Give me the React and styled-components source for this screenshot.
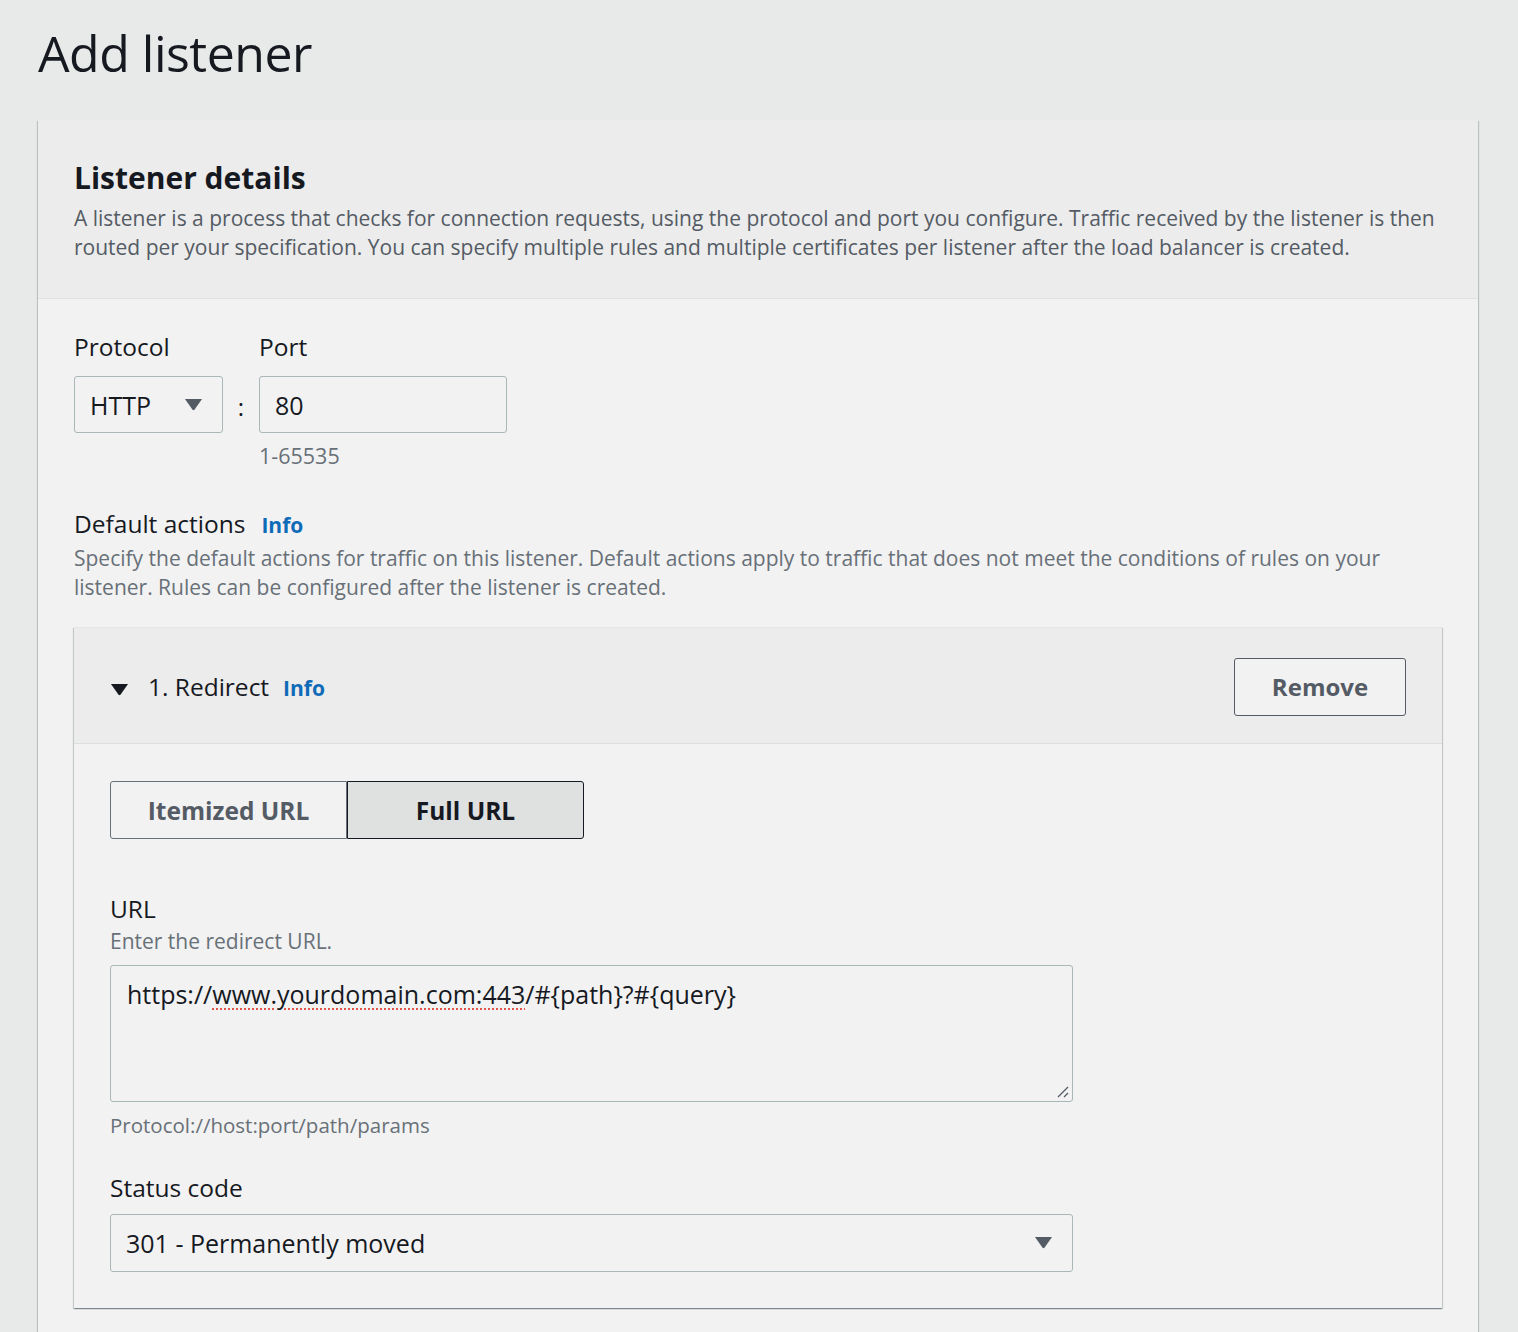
import React from "react";
import styled, { createGlobalStyle } from "styled-components";

const GlobalStyle = createGlobalStyle`
  html, body {
    margin: 0;
    background: #e8eaea;
    font-family: "Open Sans", "Noto Sans", sans-serif;
    color: #16191f;
  }
`;

const Page = styled.div`
  padding: 20px 40px 0 38px;
  height: 1332px;
  box-sizing: border-box;
  overflow: hidden;
`;

const Title = styled.h1`
  margin: 0;
  height: 100px;
  font-size: 50px;
  font-weight: 400;
  line-height: 66px;
  letter-spacing: -0.5px;
`;

const Panel = styled.section`
  background: #f2f2f2;
  box-shadow: 0 1px 1px 0 rgba(0, 28, 36, 0.3), 1px 1px 1px 0 rgba(0, 28, 36, 0.15),
    -1px 1px 1px 0 rgba(0, 28, 36, 0.15);
  min-height: 1300px;
`;

const PanelHeader = styled.header`
  background: #ececec;
  border-bottom: 1px solid #e0e1e1;
  padding: 38px 36px 36px;
`;

const Heading = styled.h2`
  margin: 0 0 6px;
  font-size: 30px;
  font-weight: 700;
  line-height: 40px;
`;

const Desc = styled.p`
  margin: ${(p) => p.$mt || 0}px 0 0;
  font-size: 21px;
  line-height: 29px;
  color: ${(p) => p.$color || "#545b64"};
`;

const PanelBody = styled.div`
  padding: 32px 36px 0;
`;

const FieldRow = styled.div`
  display: flex;
  align-items: flex-start;
`;

const Field = styled.div`
  display: flex;
  flex-direction: column;
`;

const Label = styled.label`
  font-size: 24.5px;
  line-height: 32px;
  margin-bottom: ${(p) => (p.$mb === undefined ? 13 : p.$mb)}px;
  display: flex;
  align-items: baseline;
  gap: 16px;
`;

const InfoLink = styled.a`
  color: #0f6bb8;
  font-weight: 700;
  font-size: 21px;
  text-decoration: none;
`;

const Box = styled.div`
  box-sizing: border-box;
  width: ${(p) => p.$w}px;
  height: ${(p) => p.$h || 57}px;
  border: 1px solid #aab7b8;
  border-radius: 3px;
  display: flex;
  align-items: ${(p) => (p.$top ? "flex-start" : "center")};
  justify-content: space-between;
  padding: ${(p) => (p.$top ? "11px 16px" : "0 19px 0 15px")};
  font-size: 25px;
  background: #f2f2f2;
  position: relative;
`;

const Colon = styled.span`
  font-size: 24px;
  width: 36px;
  text-align: center;
  margin-top: 59px;
`;

const Hint = styled.div`
  color: #687078;
  font-size: ${(p) => p.$fs || 21.5}px;
  line-height: 28px;
  margin-top: 9px;
`;

const Caret = styled.svg`
  width: ${(p) => p.$s || 19}px;
  height: ${(p) => (p.$s || 19) * 0.7}px;
  fill: ${(p) => p.$c || "#545b64"};
  flex-shrink: 0;
`;

const Section = styled.div`
  margin-top: ${(p) => p.$mt || 0}px;
`;

const Card = styled.div`
  margin-top: 25px;
  background: #f2f2f2;
  box-shadow: 0 1px 1px 0 rgba(0, 28, 36, 0.3), 1px 1px 1px 0 rgba(0, 28, 36, 0.15),
    -1px 1px 1px 0 rgba(0, 28, 36, 0.15);
  border-top: 1px solid #e4e5e5;
`;

const CardHeader = styled.div`
  background: #ececec;
  border-bottom: 1px solid #dcdddd;
  height: 116px;
  box-sizing: border-box;
  display: flex;
  align-items: center;
  padding: 2px 36px 0 36px;
`;

const CardTitle = styled.div`
  display: flex;
  align-items: baseline;
  gap: 14px;
  font-size: 24.5px;
  flex: 1;
  span.caret {
    margin-right: 5px;
  }
`;

const Button = styled.button`
  box-sizing: border-box;
  width: 172px;
  height: 58px;
  border: 1px solid #545b64;
  border-radius: 3px;
  background: #f2f2f2;
  color: #545b64;
  font-family: inherit;
  font-weight: 700;
  font-size: 24px;
`;

const CardBody = styled.div`
  padding: 37px 36px 36px;
`;

const Segmented = styled.div`
  display: flex;
  width: 474px;
  height: 58px;
`;

const Segment = styled.button`
  flex: 1;
  box-sizing: border-box;
  font-family: inherit;
  font-weight: 700;
  font-size: 24.5px;
  border: 1px solid ${(p) => (p.$active ? "#16191f" : "#687078")};
  border-radius: ${(p) => (p.$active ? "0 3px 3px 0" : "3px 0 0 3px")};
  background: ${(p) => (p.$active ? "#dfe0e0" : "#f2f2f2")};
  color: ${(p) => (p.$active ? "#16191f" : "#545b64")};
`;

const FieldLabel = styled.div`
  font-size: 24.5px;
  line-height: 34px;
  margin-bottom: ${(p) => p.$mb || 0}px;
`;

const Sub = styled.div`
  color: #687078;
  font-size: 21px;
  line-height: 30px;
  margin-bottom: 9px;
`;

const Misspelled = styled.span`
  text-decoration: underline dotted #e0564a;
  text-decoration-thickness: 2px;
  text-underline-offset: 4px;
`;

const Grip = styled.svg`
  position: absolute;
  right: 2px;
  bottom: 2px;
  width: 16px;
  height: 16px;
  stroke: #545b64;
  stroke-width: 1.3;
`;

function DownCaret({ s, c }) {
  return (
    <Caret $s={s} $c={c} viewBox="0 0 20 14">
      <path d="M1 1 H19 L11 12.5 Q10 13.5 9 12.5 Z" />
    </Caret>
  );
}

export default function App() {
  return (
    <>
      <GlobalStyle />
      <Page>
        <Title>Add listener</Title>
        <Panel>
          <PanelHeader>
            <Heading>Listener details</Heading>
            <Desc>
              A listener is a process that checks for connection requests, using the protocol and
              port you configure. Traffic received by the listener is then routed per your
              specification. You can specify multiple rules and multiple certificates per listener
              after the load balancer is created.
            </Desc>
          </PanelHeader>
          <PanelBody>
            <FieldRow>
              <Field>
                <Label>Protocol</Label>
                <Box $w={149}>
                  HTTP
                  <DownCaret />
                </Box>
              </Field>
              <Colon>:</Colon>
              <Field>
                <Label>Port</Label>
                <Box $w={248}>80</Box>
                <Hint>1-65535</Hint>
              </Field>
            </FieldRow>

            <Section $mt={38}>
              <Label as="div" $mb={0}>
                Default actions <InfoLink href="#">Info</InfoLink>
              </Label>
              <Desc $color="#687078" $mt={3}>
                Specify the default actions for traffic on this listener. Default actions apply to
                traffic that does not meet the conditions of rules on your listener. Rules can be
                configured after the listener is created.
              </Desc>
            </Section>

            <Card>
              <CardHeader>
                <CardTitle>
                  <span className="caret">
                    <DownCaret s={19} c="#16191f" />
                  </span>
                  1. Redirect <InfoLink href="#">Info</InfoLink>
                </CardTitle>
                <Button>Remove</Button>
              </CardHeader>
              <CardBody>
                <Segmented>
                  <Segment>Itemized URL</Segment>
                  <Segment $active>Full URL</Segment>
                </Segmented>

                <Section $mt={53}>
                  <FieldLabel>URL</FieldLabel>
                  <Sub>Enter the redirect URL.</Sub>
                  <Box $w={963} $h={137} $top>
                    <span>
                      https://<Misspelled>www.yourdomain.com:443</Misspelled>/#{"{"}path{"}"}?#
                      {"{"}query{"}"}
                    </span>
                    <Grip viewBox="0 0 16 16">
                      <path d="M14 4 L4 14 M14 10 L10 14" />
                    </Grip>
                  </Box>
                  <Hint $fs={20.5}>Protocol://host:port/path/params</Hint>
                </Section>

                <Section $mt={32}>
                  <FieldLabel $mb={9}>Status code</FieldLabel>
                  <Box $w={963} $h={58}>
                    301 - Permanently moved
                    <DownCaret />
                  </Box>
                </Section>
              </CardBody>
            </Card>
          </PanelBody>
        </Panel>
      </Page>
    </>
  );
}
